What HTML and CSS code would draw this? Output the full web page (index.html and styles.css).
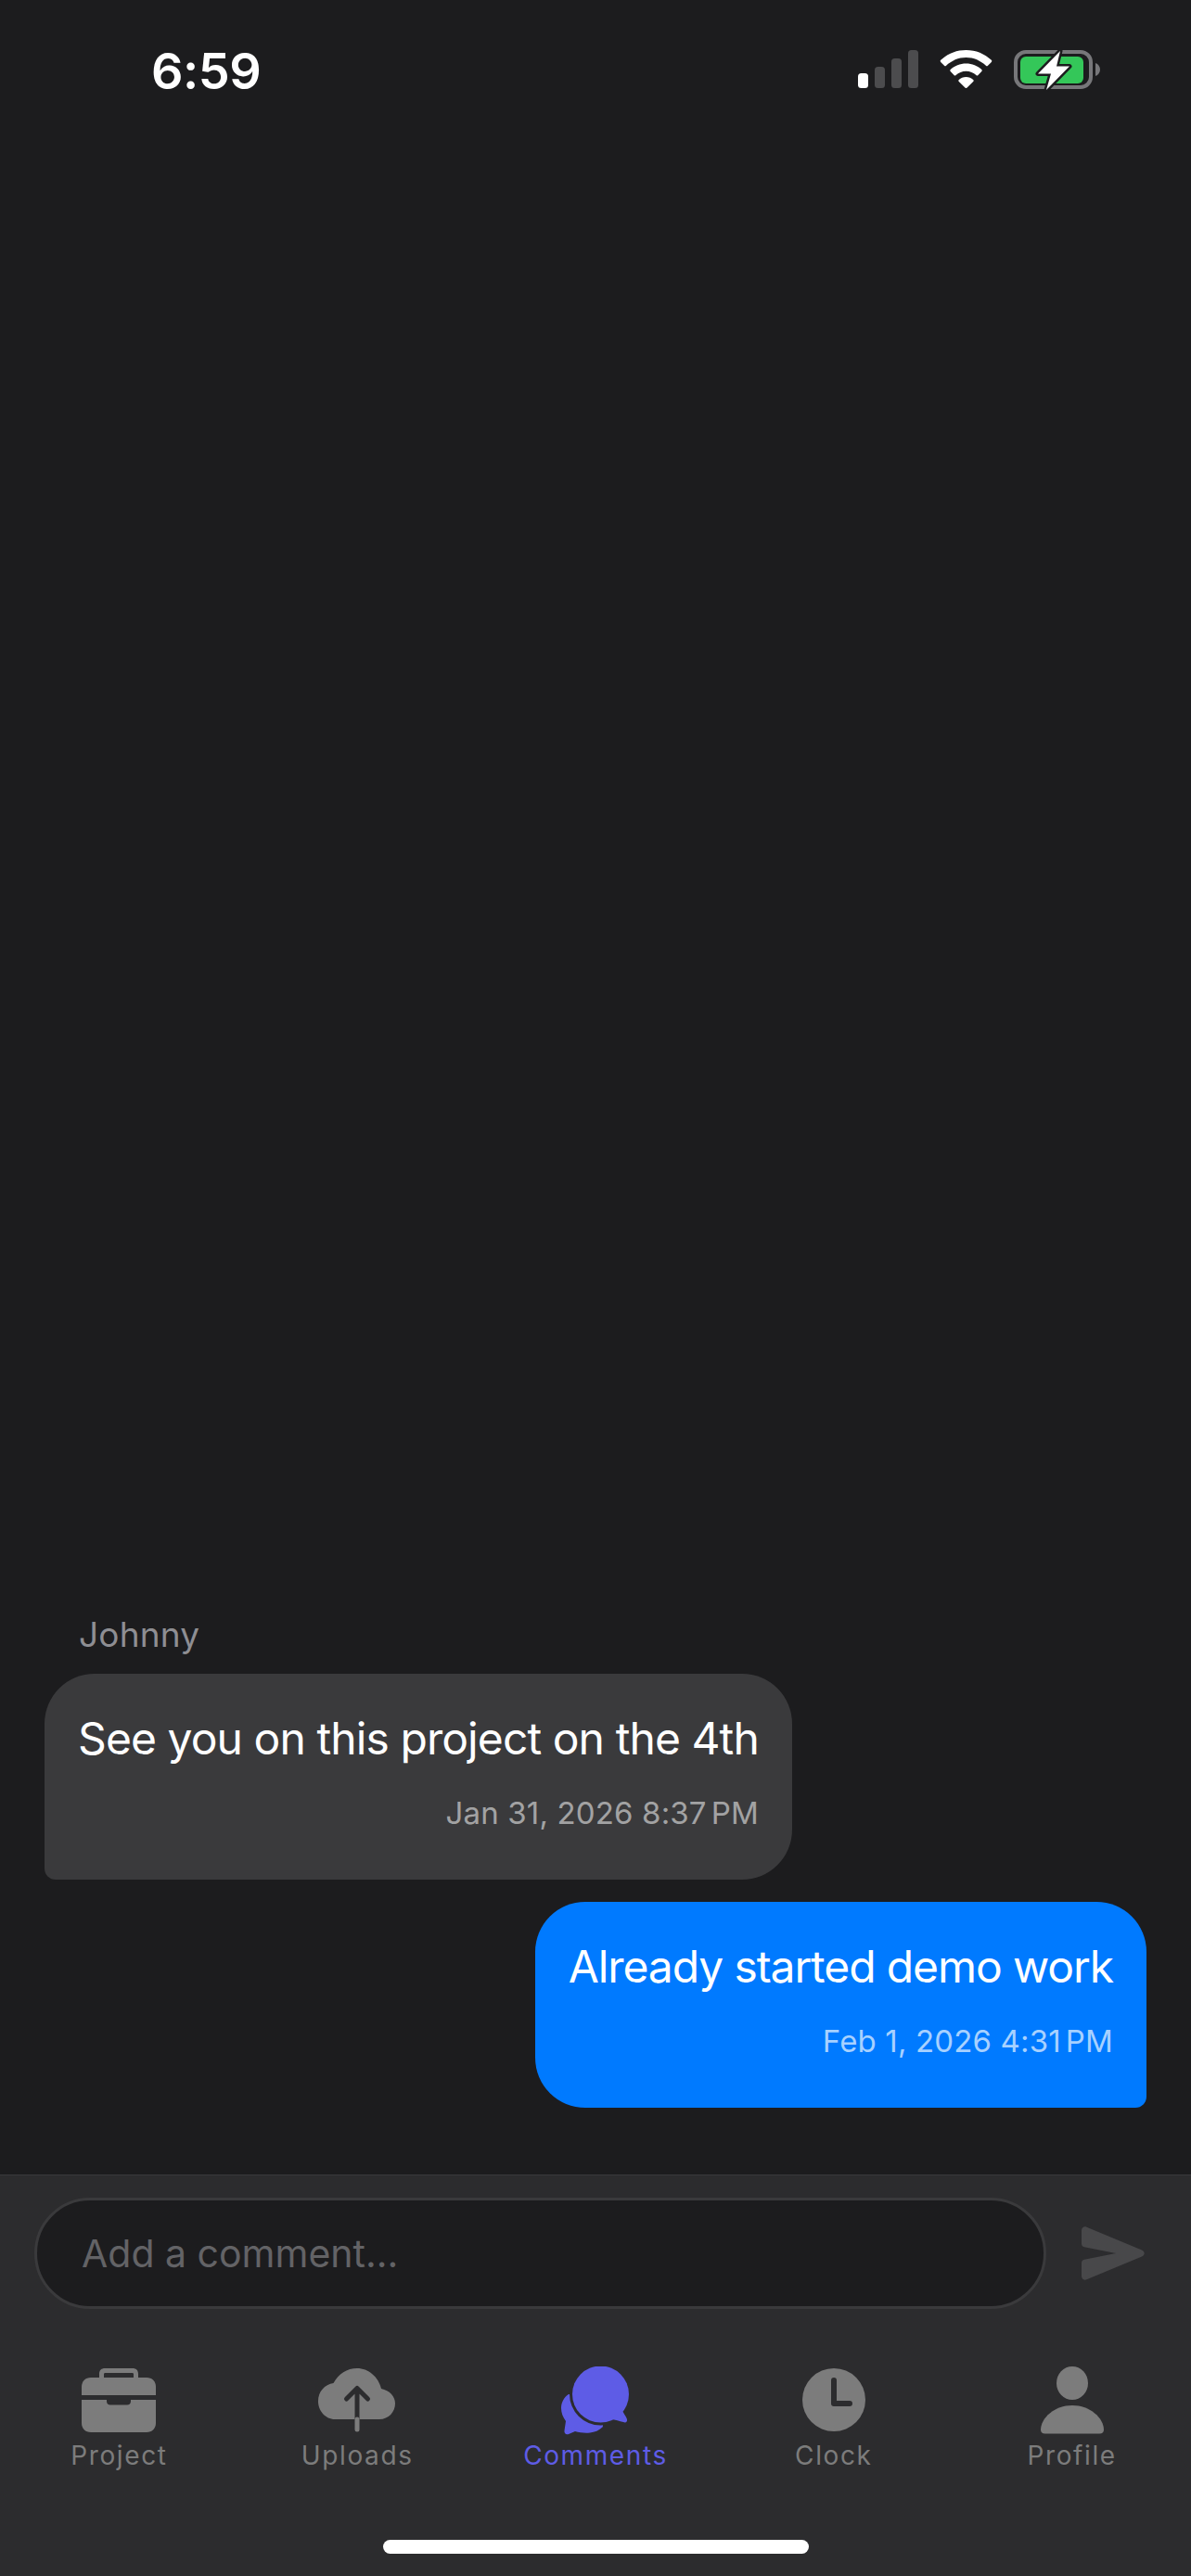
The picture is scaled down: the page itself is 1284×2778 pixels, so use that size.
FILE: index.html
```html
<!DOCTYPE html>
<html lang="en">
<head>
<meta charset="utf-8">
<title>Comments</title>
<link rel="stylesheet" href="styles.css">
</head>
<body>
<div class="app">
  <header class="status">
    <span class="time">6:59</span>
    <div class="status-icons">
      <svg class="sig" width="65" height="41" viewBox="0 0 65 41"><rect x="0" y="25" width="11" height="16" rx="3.5" fill="#fff"/><rect x="18" y="18" width="11" height="23" rx="3.5" fill="#4c4c4e"/><rect x="36" y="9" width="11" height="32" rx="3.5" fill="#4c4c4e"/><rect x="54" y="0" width="11" height="41" rx="3.5" fill="#4c4c4e"/></svg>
      <svg class="wifi" width="57" height="41" viewBox="0 0 57 41"><path d="M28.500 0C18 0 8.400 4 1.200 10.800a1.500 1.500 0 0 0 0 2.100l3.800 3.900a1.500 1.500 0 0 0 2.100 0C12.800 11.400 20.300 8 28.500 8s15.700 3.400 21.400 8.800a1.500 1.500 0 0 0 2.100 0l3.800-3.900a1.500 1.500 0 0 0 0-2.100C48.600 4 39 0 28.500 0z" fill="#fff"/><path d="M28.500 14.500c-6.500 0-12.400 2.500-16.800 6.500a1.500 1.500 0 0 0 0 2.100l3.800 3.900a1.500 1.500 0 0 0 2.100 0c2.900-2.600 6.700-4.200 10.900-4.200s8 1.600 10.900 4.200a1.500 1.500 0 0 0 2.100 0l3.800-3.900a1.500 1.500 0 0 0 0-2.100c-4.400-4-10.300-6.500-16.800-6.500z" fill="#fff"/><path d="M28.500 29c-3 0-5.700 1.100-7.700 3a1.400 1.400 0 0 0 0 2l6.600 6.500a1.500 1.500 0 0 0 2.200 0l6.600-6.500a1.400 1.400 0 0 0 0-2c-2-1.900-4.700-3-7.700-3z" fill="#fff"/></svg>
      <svg class="batt" width="93" height="46" viewBox="0 0 93 46"><rect x="2" y="3" width="81" height="38" rx="11" fill="none" stroke="#77777a" stroke-width="4"/><rect x="7" y="8" width="68" height="29" rx="6" fill="#34c759"/><path d="M88 15c3 1 5 4 5 7s-2 6-5 7z" fill="#77777a"/><path d="M50 2 26 26.500h14L35 44 60 18.500H46z" fill="#fff" stroke="#1c1c1e" stroke-width="5" stroke-linejoin="round" paint-order="stroke"/></svg>
    </div>
  </header>

  <main class="thread">
    <section class="msg msg-in">
      <div class="author">Johnny</div>
      <div class="bubble bubble-in">
        <p class="body">See you on this project on the 4th</p>
        <p class="stamp">Jan 31, 2026 8:37<span class="pm">PM</span></p>
      </div>
    </section>
    <section class="msg msg-out">
      <div class="bubble bubble-out">
        <p class="body">Already started demo work</p>
        <p class="stamp">Feb 1, 2026 4:31<span class="pm">PM</span></p>
      </div>
    </section>
  </main>

  <form class="composer">
    <div class="field"><span class="placeholder">Add a comment...</span></div>
    <svg class="send" width="68" height="58" viewBox="0 0 68 58"><path d="M0 4.500C0 1.500 2.500-.5 5.500.7L65 25.500c3.500 1.500 3.500 5.500 0 7L5.500 57.300C2.500 58.500 0 56.500 0 53.500V39.500c0-2 1-3.300 3-3.700L37 29 3 22.200c-2-.4-3-1.700-3-3.700z" fill="#48484a"/></svg>
  </form>

  <nav class="tabs">
    <a class="tab">
      <svg class="ico" width="80" height="72" viewBox="0 0 80 72"><g fill="#7c7c7c"><path d="M19 10V6c0-4 2.500-6 6-6h30c3.500 0 6 2 6 6v4h-5V6.500c0-1-.5-1.500-1.500-1.500h-29C24.500 5 24 5.500 24 6.500V10z"/><path d="M10 10h60c6 0 10 4 10 10v9H0v-9c0-6 4-10 10-10z"/><path d="M0 34h27v1.500c0 2.500 1.500 4 4 4h18c2.500 0 4-1.500 4-4V34h27v25c0 6-4 10-10 10H10C4 69 0 65 0 59z"/></g></svg>
      <span class="label">Project</span>
    </a>
    <a class="tab">
      <svg class="ico" width="84" height="72" viewBox="0 0 84 72"><path d="M18 55C8 55 0 46 0 35.500 0 25 7 17.500 16.500 16 22 6 31 0 42 0c12 0 23 9 26 22 9 2 15 8 15 16 0 9-7 17-17 17z" fill="#7c7c7c"/><path d="M42 55V22M30.500 33 42 21.500 53.500 33" fill="none" stroke="#2c2c2e" stroke-width="5" stroke-linecap="round" stroke-linejoin="round"/><path d="M42 55V66" stroke="#7c7c7c" stroke-width="5" stroke-linecap="round"/></svg>
      <span class="label">Uploads</span>
    </a>
    <a class="tab active">
      <svg class="ico ico-tall" width="74" height="74" viewBox="0 0 74 74"><path d="M8 30C3 33 0 39 0 45c0 5 2 10 5 14L3.500 69C3 72 5 74 8 73l7-3c5 1.500 11 2 16 1.500 5-.5 10-2.500 13.500-6 1.500-2.500-.5-3.500-1.500-3.500L30 50 12 30z" fill="#5e5ce6"/><circle cx="42.500" cy="30" r="33.500" fill="#2c2c2e"/><circle cx="42.500" cy="30" r="30.500" fill="#5e5ce6"/><path d="M65 46c2 4 5 8 6 11 .5 3-1.500 4-4 3-4-1-9-2.500-13-3z" fill="#5e5ce6"/></svg>
      <span class="label">Comments</span>
    </a>
    <a class="tab">
      <svg class="ico" width="68" height="72" viewBox="0 0 68 72"><circle cx="34" cy="34" r="34" fill="#7c7c7c"/><path d="M34 13V38H51" fill="none" stroke="#2c2c2e" stroke-width="6" stroke-linecap="round" stroke-linejoin="round"/></svg>
      <span class="label">Clock</span>
    </a>
    <a class="tab">
      <svg class="ico ico-tall" width="68" height="74" viewBox="0 0 68 74"><ellipse cx="34" cy="18" rx="17" ry="18" fill="#7c7c7c"/><path d="M34 42c19 0 34 13.500 34 26.500 0 2.500-2 4-4.500 4h-59C2 72.500 0 71 0 68.500 0 55.500 15 42 34 42z" fill="#7c7c7c"/></svg>
      <span class="label">Profile</span>
    </a>
  </nav>

  <footer class="home-row"><div class="home"></div></footer>
</div>
</body>
</html>
```

FILE: styles.css
```css
* { box-sizing: border-box; }
html, body { margin: 0; padding: 0; background: #1c1c1e; }
body { font-family: Inter, "Liberation Sans", sans-serif; color: #fff; }
p { margin: 0; }

.app { width: 1284px; height: 2778px; display: flex; flex-direction: column; overflow: hidden; background: #1c1c1e; }

.status { height: 118px; padding: 47px 98px 0 163px; display: flex; justify-content: space-between; align-items: flex-start; flex: none; }
.time { font-size: 54px; font-weight: 600; line-height: 60px; letter-spacing: -0.5px; }
.status-icons { display: flex; align-items: flex-start; gap: 23px; padding-top: 7px; }
.batt { margin-top: -1px; }

.thread { flex: 1; display: flex; flex-direction: column; justify-content: flex-end; gap: 24px; padding: 0 48px 72px; }
.msg { display: flex; flex-direction: column; }
.msg-in { align-items: flex-start; }
.msg-out { align-items: flex-end; }
.author { font-size: 37px; line-height: 44px; color: #8e8e93; padding-left: 37px; margin-bottom: 20px; letter-spacing: 0.2px; }

.bubble { height: 222px; padding: 37px 36px 0; border-radius: 54px; display: flex; flex-direction: column; align-items: flex-end; }
.bubble-in { background: #3a3a3c; border-bottom-left-radius: 12px; }
.bubble-out { background: #007aff; border-bottom-right-radius: 12px; }
.body { font-size: 48px; line-height: 66px; white-space: nowrap; letter-spacing: -0.92px; }
.bubble-out .body { letter-spacing: -1.1px; }
.stamp { font-size: 33px; line-height: 44px; margin-top: 25px; color: rgba(255,255,255,0.55); white-space: nowrap; letter-spacing: 0.15px; }
.bubble-out .stamp { color: rgba(255,255,255,0.66); }
.pm { margin-left: 5px; }

.composer { flex: none; height: 169px; border-top: 1px solid #3a3a3c; background: #2c2c2e; padding: 24px 50px 24px 37px; display: flex; align-items: center; justify-content: space-between; }
.field { width: 1091px; height: 120px; border: 3px solid #3a3a3c; border-radius: 60px; background: #1c1c1e; display: flex; align-items: center; padding-left: 48px; }
.placeholder { font-size: 41px; color: #636366; }
.send { flex: none; }

.tabs { flex: none; height: 195px; background: #2c2c2e; display: grid; grid-template-columns: repeat(5, 1fr); padding-top: 40px; }
.tab { display: flex; flex-direction: column; align-items: center; }
.ico { flex: none; }
.ico-tall { margin-top: -2px; }
.label { font-size: 28px; line-height: 36px; margin-top: 4px; color: #7c7c7c; letter-spacing: 1.6px; }
.active .label { color: #5e5ce6; }

.home-row { flex: none; height: 69px; background: #2c2c2e; padding-top: 30px; }
.home { width: 459px; height: 15px; margin-left: 413px; border-radius: 8px; background: #fff; }
```
